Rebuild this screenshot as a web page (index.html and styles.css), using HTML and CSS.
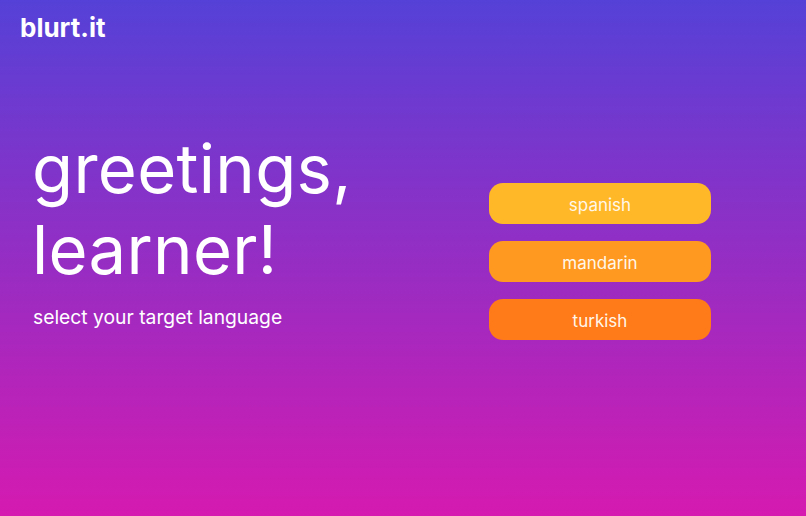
FILE: index.html
```html
<!DOCTYPE html>
<html>
<head>
<meta charset="utf-8">
<link rel="stylesheet" href="styles.css">
</head>
<body>
<div class="page">
  <header class="top">
    <div class="logo">blurt.it</div>
  </header>
  <main class="main">
    <section class="intro">
      <h1 class="title">greetings,<br>learner!</h1>
      <p class="subtitle">select your target language</p>
    </section>
    <nav class="langs">
      <button class="lang lang-spanish">spanish</button>
      <button class="lang lang-mandarin">mandarin</button>
      <button class="lang lang-turkish">turkish</button>
    </nav>
  </main>
</div>
</body>
</html>
```
FILE: styles.css
```css
html, body {
  margin: 0;
  padding: 0;
}
body {
  width: 806px;
  height: 516px;
  overflow: hidden;
  font-family: Inter, "Noto Sans", sans-serif;
  color: #fff;
  background: linear-gradient(180deg, #5541d7 0%, #d51ab0 100%);
}
.page {
  height: 516px;
  display: flex;
  flex-direction: column;
}
.top {
  padding: 12px 0 0 20px;
  height: 32px;
}
.logo {
  font-size: 26px;
  font-weight: 700;
  line-height: 32px;
}
.main {
  display: flex;
  justify-content: space-between;
  padding: 0 95px 0 33px;
}
.intro {
  padding-top: 84px;
}
.title {
  margin: 0 0 0 -1px;
  font-size: 67px;
  font-weight: 400;
  line-height: 81px;
  letter-spacing: 0.3px;
}
.subtitle {
  margin: 15px 0 0 0;
  font-size: 19.3px;
  line-height: 24px;
}
.langs {
  display: flex;
  flex-direction: column;
  gap: 17px;
  padding-top: 139px;
  width: 222px;
}
.lang {
  height: 41px;
  border: none;
  border-radius: 14px;
  font-family: Inter, "Noto Sans", sans-serif;
  font-size: 17px;
  color: #fff7ea;
  padding: 2px 0 0 0;
  cursor: pointer;
}
.lang-spanish { background: #ffb828; }
.lang-mandarin { background: #ff991f; }
.lang-turkish { background: #ff7a18; }
```
